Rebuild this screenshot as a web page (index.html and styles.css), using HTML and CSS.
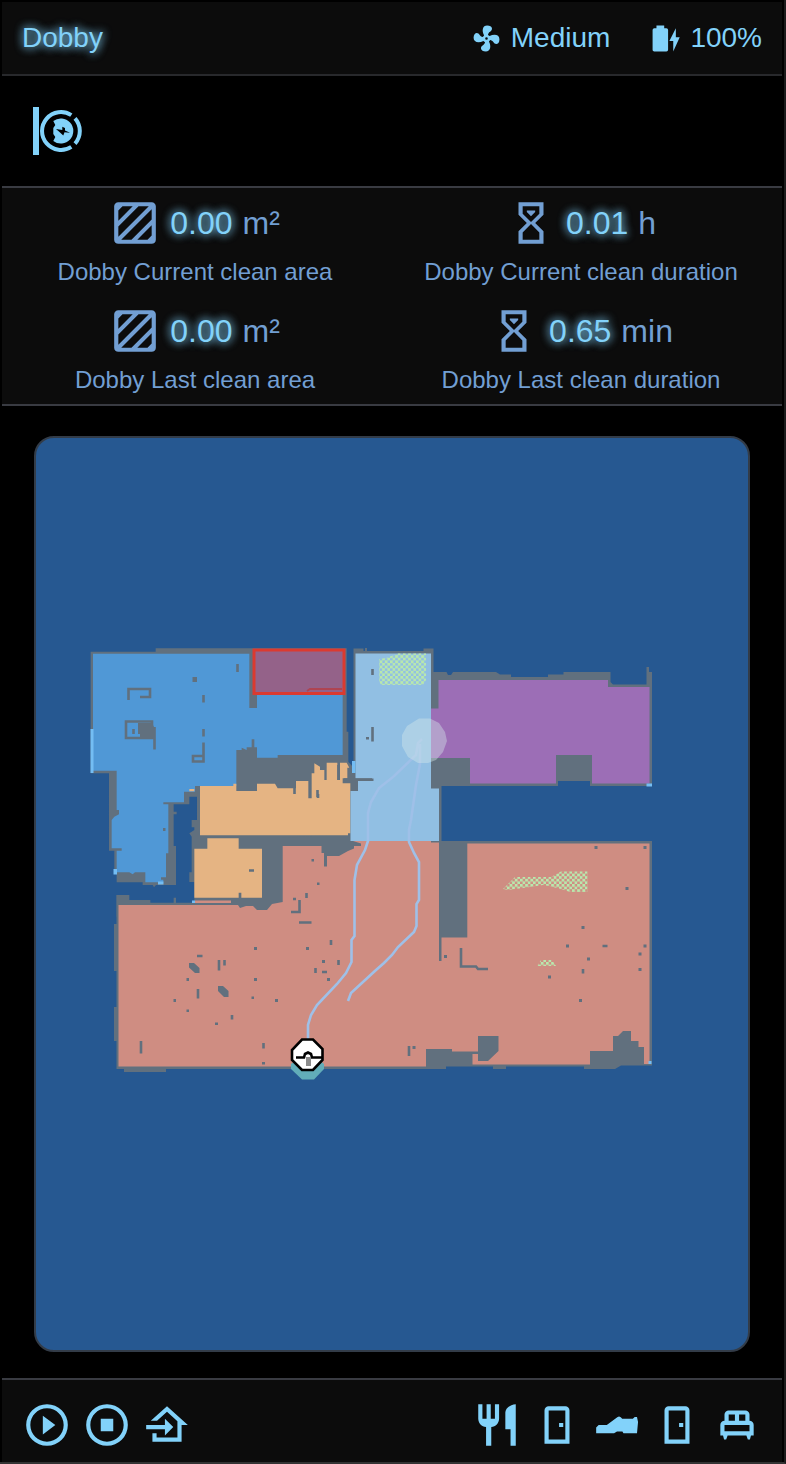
FILE: index.html
```html
<!DOCTYPE html>
<html lang="en">
<head>
<meta charset="utf-8">
<meta name="viewport" content="width=device-width, initial-scale=1">
<title>Dobby</title>
<link rel="stylesheet" href="styles.css">
</head>
<body>
<main class="card">
  <header class="header">
    <h1 class="name glow">Dobby</h1>
    <div class="chips">
      <div class="chip">
        <svg class="icon-small" viewBox="0 0 24 24" aria-hidden="true"><path d="M12,11A1,1 0 0,0 11,12A1,1 0 0,0 12,13A1,1 0 0,0 13,12A1,1 0 0,0 12,11M12.5,2C17,2 17.11,5.57 14.75,6.75C13.76,7.24 13.32,8.29 13.13,9.22C13.61,9.42 14.03,9.73 14.35,10.13C18.05,8.13 22.03,8.92 22.03,12.5C22.03,17 18.46,17.1 17.28,14.73C16.78,13.74 15.72,13.3 14.79,13.11C14.59,13.59 14.28,14 13.88,14.34C15.87,18.03 15.08,22 11.5,22C7,22 6.91,18.42 9.27,17.24C10.25,16.75 10.69,15.71 10.89,14.79C10.4,14.59 9.97,14.27 9.65,13.87C5.96,15.85 2,15.07 2,11.5C2,7 5.56,6.89 6.74,9.26C7.24,10.25 8.29,10.68 9.22,10.87C9.41,10.39 9.73,9.97 10.14,9.65C8.15,5.96 8.94,2 12.5,2Z"/></svg>
        <span>Medium</span>
      </div>
      <div class="chip">
        <svg class="icon-small" viewBox="0 0 24 24" aria-hidden="true"><path d="M23,11H20V4L15,14H18V22M12.67,4H11V2H5V4H3.33A1.33,1.33 0 0,0 2,5.33V20.67C2,21.4 2.6,22 3.33,22H12.67A1.33,1.33 0 0,0 14,20.67V5.33A1.33,1.33 0 0,0 12.67,4Z"/></svg>
        <span>100%</span>
      </div>
    </div>
  </header>

  <section class="status">
    <svg class="icon" viewBox="0 0 50 50" role="img" aria-label="Docked, charging">
      <path d="M0 1H6V49H0Z"/>
      <path class="ring" d="M38.3 9.2A18.9 18.9 0 1 0 38.3 40.8M42 12.4A18.9 18.9 0 0 1 42 37.6"/>
      <path d="M20.3 15A12.5 12.5 0 1 1 20.3 35L22.3 31L20.3 28V22L22.3 19Z"/>
      <path class="bolt" d="M23 23L29.3 24V20.7L32 22V24.5L37 26.7L31.5 26.3L30.3 29.5L27 26.5Z"/>
    </svg>
  </section>

  <section class="stats">
    <div class="stat">
      <div class="reading"><svg class="icon" viewBox="0 0 24 24" aria-hidden="true"><use href="#area"/></svg><span class="number glow">0.00</span><span>m²</span></div>
      <div class="label">Dobby Current clean area</div>
    </div>
    <div class="stat">
      <div class="reading"><svg class="icon" viewBox="0 0 24 24" aria-hidden="true"><use href="#sand"/></svg><span class="number glow">0.01</span><span>h</span></div>
      <div class="label">Dobby Current clean duration</div>
    </div>
    <div class="stat">
      <div class="reading"><svg class="icon" viewBox="0 0 24 24" aria-hidden="true"><use href="#area"/></svg><span class="number glow">0.00</span><span>m²</span></div>
      <div class="label">Dobby Last clean area</div>
    </div>
    <div class="stat">
      <div class="reading"><svg class="icon" viewBox="0 0 24 24" aria-hidden="true"><use href="#sand"/></svg><span class="number glow">0.65</span><span>min</span></div>
      <div class="label">Dobby Last clean duration</div>
    </div>
  </section>

  <section class="map-area">
    <div class="map">
      <svg class="floor" viewBox="36 438 712 912" role="img" aria-label="Floor map">
        <defs>
          <pattern id="dots" width="5.2" height="5.2" patternUnits="userSpaceOnUse"><path class="rug" d="M0 0H2.8V2.8H0ZM2.6 2.6H5.2V5.2H2.6Z"/></pattern>
        </defs>

        <!-- walls -->
        <g class="wall">
          <path transform="translate(80 640) scale(.33333)" d="M32 35H227V25H800V275H805V365L835 400V455H827V800H343V726H328V697H335V590L328 580L343 570V562H335V540H351V470H328V493H281V515H290V523H281V618H288V735H228L222 742L218 735H188V727H110V700H103V632H87V400H32ZM110 765H148V780H211V788H281V773H288V788H343V800H400V830H110Z"/>
          <path d="M353.500 648.500H363.500V651H365V648H367V651H423.500V648.500H433.500V672H446.500L448 675H451L453 672H496L500 674.500H511V677H548V674.500H563.500V672H610.500V682L613 684.500H646.500V667H649V672H652V786H590V781H558V786H441.500V841H652V1065.500H621L615 1069H584V1066.500H506V1069H493V1066.500H446V1069H166V1072H124V1069H116.500V1041H114V1007H116.500V971H114V924H116.500V895H129V900.500H150V903H282V838L356 833V790L353.500 760Z"/>
        </g>

        <!-- rooms -->
        <path class="room-blue" transform="translate(80 640) scale(.33333)" d="M39 41H508V204H531V165H788V345H593V353H531V322H523V298H515V322H500V330L485 323V330H469V438H345V455H312V487H250V493H265V640H258V712H243V719H250V727H196V697H165L158 703L148 697H110V632H125V625H95V540L103 530L117 523V510H110V392H39Z"/>
        <path class="room-orange" transform="translate(80 640) scale(.33333)" d="M360 438H460V431H469V453H531V431H585L593 445H648V423H685V475H695V400H703V370L720 380V390H733V420H740V368H772V420H780V368H800L808 383H802V415H788V430H811V580H804V586H360ZM328 447H343V454H328ZM382 595H476V626H546V773H484V758H476V773H343V626H382Z"/>
        <path class="room-salmon" d="M118.500 905H238L240 908L246 906H253L257 910H267L272 904L282.700 902V846H321.500V853H324V866.500H327V856H339L348 851L354 848.500V846H361V843.500L353 841H431V842.500H439V961H441.500V937.500H467.300V843.500H649.500V1064H644V1047H638.500V1041H631V1031H623L618 1036H613V1051H590V1064.500H472.500V1054H478V1061H488L498.500 1051V1036H478V1051.500H452V1049H426V1066.500H118.500Z"/>
        <path class="room-hall" d="M355.500 653.500H431V788.500H439V841H350.500V791H358V781H373.500V778.500H355.500Z"/>
        <path class="room-purple" d="M438.500 680H608V687H649.500V783.500H592V755H556V783.500H470V758H431V708.500H438.500Z"/>

        <!-- furniture outlines and obstacles -->
        <path class="wall-line" d="M128.500 700V689H150V697H140M126 721.500H152V738H126ZM133.500 729V734M154.500 727V749.500M203.500 695V702.500M203.500 729V736.500M203.500 742.500V761.500H193V756H203.500M237.500 664V672M372.500 669V675M372.500 727V741.500M461 948V966.500H476L478 969H488M299.500 900V912H291M293 899H296M299 922.500H311.500M141 1041V1053.500M409 1046V1056M294.500 780V794M317.500 790V797M338.500 765V780M344 779.500H372M318 794V798M306.500 893V898M219 960V970.500M224.500 960V965.500M198 989V998.500M197 956H202.500M331 940V945M338.500 960V965M315.500 968V973M322 972H327M232 1015V1019.500M263.500 1043V1048.500M583 969V973.500M602.500 946H607.500M249 870.500H254"/>
        <path class="wall" d="M192.500 677H197V682H192.500ZM138 723H152L155 729V739H140V734H138ZM189 963H194L199.500 968V973H195L189 967.500ZM218 986H223L228.500 991V997H224L218 991ZM163 828H165.500V831H163ZM366 737H369V739.500H366ZM311.500 859H314V861.500H311.500ZM317 882.500H319.500V885H317ZM254 947H257V950H254ZM306 947H309V950H306ZM322 960H325V963H322ZM327 978H330V981H327ZM254 978H257V981H254ZM186.500 978H189V981H186.500ZM173.500 999H176V1002H173.500ZM186.500 1009.500H189V1012H186.500ZM215 1022.500H218V1025H215ZM251.500 996.500H254V999H251.500ZM275 999H278V1002H275ZM262 1062H265V1064.500H262ZM412.500 1046H415.500V1049H412.500ZM444 955H447V958H444ZM594.500 846H597.500V849H594.500ZM643.500 846H646.500V849H643.500ZM625.500 887H628.500V890H625.500ZM581.500 926H584.500V929H581.500ZM566 944.500H569V947.500H566ZM643.500 944.500H646.500V947.500H643.500ZM638.500 952.500H641.500V955.500H638.500ZM587 957.500H590V960.500H587ZM638.500 968H641.500V971H638.500ZM548 975.500H551V978.500H548ZM579 999H582V1002H579Z"/>
        <path class="marker" d="M90.500 729H93.500V773H90.500ZM113.500 869H117V874.500H113.500ZM158 881.500H163.500V884.500H158ZM352 761H355.500V773H352ZM646.500 783.500H652V786.500H646.500ZM192 900.500H195V903H192ZM648.500 1061H651.500V1064H648.500Z"/>
        <path class="thin-room" d="M195 900.500H231V903H195Z"/>

        <!-- carpets -->
        <path fill="url(#dots)" d="M379 659L386 658L398 653.500H426V680L423 685H381L379 681ZM503 889L515 877H551L561 871.500H587.500V892H570L561 889L549 886L543 885L530 887L508 890ZM537 966L541 960H552L556 966Z"/>

        <!-- no-go zone -->
        <path class="zone" d="M254 650H344V693.500H254Z"/>
        <path class="zone-wall" d="M307 691L310 689H342"/>

        <!-- travelled path -->
        <path class="trail" d="M422 739L418 743L416 755L393 777L379 788L371 802L368 813V841L365 850L357 865L354.500 880V936L351.500 940V962L346 973L337 984L317 1005L311 1015L308 1025V1040M420 744V764L416 785L413 806L411 820L409 830V842L414 853L419 862V900L416.500 904V926L414 932L398 947L392 955L384 963L376 970L351 993L348 1001"/>

        <!-- robot position and dock -->
        <path class="halo" d="M419 718.500H430L439 723L445 732L447 741L443 752L436 760L428 763H418L408 757L402 746V735L407 726Z"/>
        <path class="dock-glow" d="M291 1064L300 1057H316L324 1064V1069L314 1079.500H302L291 1069Z"/>
        <path class="dock" d="M302 1039.500H313L322.500 1049V1060L313 1070H302L292 1060V1050Z"/>
        <path class="dock-line" d="M296 1057.500H304L305 1054L308 1052.500L311 1054L312 1057.500H322"/>
        <path class="dock-stem" d="M306 1057H311V1066H306Z"/>
      </svg>
    </div>
  </section>

  <footer class="toolbar">
    <div class="actions">
      <button class="action" type="button" aria-label="Start"><svg class="icon" viewBox="0 0 24 24"><path d="M12,20C7.59,20 4,16.41 4,12C4,7.59 7.59,4 12,4C16.41,4 20,7.59 20,12C20,16.41 16.41,20 12,20M12,2A10,10 0 0,0 2,12A10,10 0 0,0 12,22A10,10 0 0,0 22,12A10,10 0 0,0 12,2M10,16.500L16,12L10,7.500V16.500Z"/></svg></button>
      <button class="action" type="button" aria-label="Stop"><svg class="icon" viewBox="0 0 24 24"><path d="M12,20C7.59,20 4,16.41 4,12C4,7.59 7.59,4 12,4C16.41,4 20,7.59 20,12C20,16.41 16.41,20 12,20M12,2A10,10 0 0,0 2,12A10,10 0 0,0 12,22A10,10 0 0,0 22,12A10,10 0 0,0 12,2M9,9V15H15V9H9Z"/></svg></button>
      <button class="action" type="button" aria-label="Return to dock"><svg class="icon" viewBox="0 0 24 24"><path d="M15 13L11 17V14H2V12H11V9L15 13M5 20V16H7V18H17V10.190L12 5.690L7.210 10H4.220L12 3L22 12H19V20H5Z"/></svg></button>
    </div>
    <div class="actions">
      <button class="action" type="button" aria-label="Clean kitchen"><svg class="icon" viewBox="0 0 24 24"><path d="M11,9H9V2H7V9H5V2H3V9C3,11.120 4.660,12.840 6.750,12.970V22H9.250V12.970C11.340,12.840 13,11.120 13,9V2H11V9M16,6V14H18.500V22H21V2C18.240,2 16,4.240 16,6Z"/></svg></button>
      <button class="action" type="button" aria-label="Clean first room"><svg class="icon" viewBox="0 0 24 24"><use href="#door"/></svg></button>
      <button class="action" type="button" aria-label="Clean hallway"><svg class="icon" viewBox="0 0 24 24"><path d="M2,16V13.200L3.200,12H7.100L12.300,8.200L13,7.900L13.800,8.300L14.500,9H19.600L20.500,8.100H21.600L22.100,10.500L21.600,16H15.100L14.600,15.100H12L10.600,16Z"/></svg></button>
      <button class="action" type="button" aria-label="Clean second room"><svg class="icon" viewBox="0 0 24 24"><use href="#door"/></svg></button>
      <button class="action" type="button" aria-label="Clean bedroom"><svg class="icon" viewBox="0 0 24 24"><path fill-rule="evenodd" d="M8,5H16A2,2 0 0 1 18,7V10A2,2 0 0 1 20,12V17H18.700L18.200,19H17.200L16.500,17H7.500L6.800,19H5.800L5.300,17H4V12A2,2 0 0 1 6,10V7A2,2 0 0 1 8,5M8,7V10H11V7ZM13,7V10H16V7ZM6,12V15H18V12Z"/></svg></button>
    </div>
  </footer>
</main>

<svg class="symbols" width="0" height="0" aria-hidden="true">
  <defs>
    <path id="area" d="M20,2H4C2.890,2 2,2.890 2,4V20C2,21.110 2.890,22 4,22H20C21.110,22 22,21.110 22,20V4C22,2.890 21.110,2 20,2M4,6L6,4H10.900L4,10.900V6M4,13.700L13.700,4H18.600L4,18.600V13.700M20,18L18,20H13.100L20,13.100V18M20,10.300L10.300,20H5.400L20,5.400V10.300Z"/>
    <path id="sand" d="M6,2H18V8L14,12L18,16V22H6V16L10,12L6,8V2M16,16.500L12,12.500L8,16.500V20H16V16.500M12,11.500L16,7.500V4H8V7.500L12,11.500M10,6H14V6.750L12,8.750L10,6.750V6Z"/>
    <path id="door" fill-rule="evenodd" d="M8,3C6.890,3 6,3.890 6,5V21H18V5C18,3.890 17.110,3 16,3H8M8,5H16V19H8V5M13,11V13H15V11H13Z"/>
  </defs>
</svg>
</body>
</html>
```
FILE: styles.css
```css
* {
  box-sizing: border-box;
}

body {
  min-height: 100vh;
  margin: 0;
  padding: 2px 2px 0;
  display: flex;
  flex-direction: column;
  background: #000;
  border-right: 2px solid #1c1c1c;
  border-bottom: 2px solid #333;
  color: #82d2fa;
  font-family: "Liberation Sans", Arial, Helvetica, sans-serif;
}

.symbols {
  position: absolute;
}

svg {
  fill: currentColor;
}

.card {
  flex: 1;
  display: flex;
  flex-direction: column;
}

.header {
  display: flex;
  justify-content: space-between;
  align-items: center;
  padding: 20px;
  background: #0c0c0c;
  border-bottom: 2px solid #28292c;
  font-size: 28px;
  line-height: 32px;
}

.name {
  margin: 0;
  font-size: 28px;
  font-weight: 400;
}

.glow {
  text-shadow: 0 0 10px #82d2fa, 0 0 10px rgba(130, 210, 250, 0.6);
}

.chips {
  display: flex;
  gap: 40px;
}

.chip {
  display: flex;
  align-items: center;
  gap: 9px;
}

.icon-small {
  width: 31px;
  height: 31px;
}

.icon {
  display: block;
  width: 50px;
  height: 50px;
}

.status {
  padding: 30px 31px;
}

.ring {
  fill: none;
  stroke: currentColor;
  stroke-width: 4;
}

.bolt {
  fill: #000;
}

.stats {
  display: grid;
  grid-template-columns: 1fr 1fr;
  row-gap: 20px;
  padding: 10px 8px 10px 0;
  background: #0c0c0c;
  border-top: 2px solid #393b42;
  border-bottom: 2px solid #393b42;
  color: #729fd3;
}

.stat {
  display: flex;
  flex-direction: column;
  align-items: center;
  gap: 10px;
}

.reading {
  display: flex;
  align-items: center;
  gap: 10px;
  font-size: 32px;
}

.number {
  color: #82d2fa;
}

.label {
  font-size: 24px;
  line-height: 28px;
}

.map-area {
  flex: 1;
  padding: 30px 32px 26px;
}

.map {
  overflow: hidden;
  background: #265891;
  border: 2px solid #333c48;
  border-radius: 20px;
}

.floor {
  display: block;
  width: 100%;
}

.wall {
  fill: #61707e;
}

.wall-line {
  fill: none;
  stroke: #61707e;
  stroke-width: 2.6;
}

.room-blue {
  fill: #5098d6;
}

.room-orange {
  fill: #e5b483;
}

.room-salmon,
.thin-room {
  fill: #cf8d82;
}

.room-hall {
  fill: #91bfe3;
}

.room-purple {
  fill: #9c6eb6;
}

.rug {
  fill: #b9e8ad;
}

.marker {
  fill: #74bdf3;
}

.zone {
  fill: #946289;
  stroke: #db3a30;
  stroke-width: 3;
}

.zone-wall {
  fill: none;
  stroke: #ae4452;
  stroke-width: 2;
}

.trail {
  fill: none;
  stroke: #9fc0e8;
  stroke-width: 2.6;
}

.halo {
  fill: #d8ebea;
  fill-opacity: 0.4;
}

.dock-glow {
  fill: #62adb9;
}

.dock {
  fill: #fff;
  stroke: #000;
  stroke-width: 2.6;
}

.dock-line {
  fill: none;
  stroke: #000;
  stroke-width: 2.6;
}

.dock-stem {
  fill: #8c8c8c;
}

.toolbar {
  display: flex;
  justify-content: space-between;
  padding: 20px 20px 12px;
  background: #0c0c0c;
  border-top: 2px solid #393b42;
}

.actions {
  display: flex;
  gap: 10px;
}

.action {
  padding: 0;
  border: 0;
  background: none;
  color: inherit;
  cursor: pointer;
}
```
